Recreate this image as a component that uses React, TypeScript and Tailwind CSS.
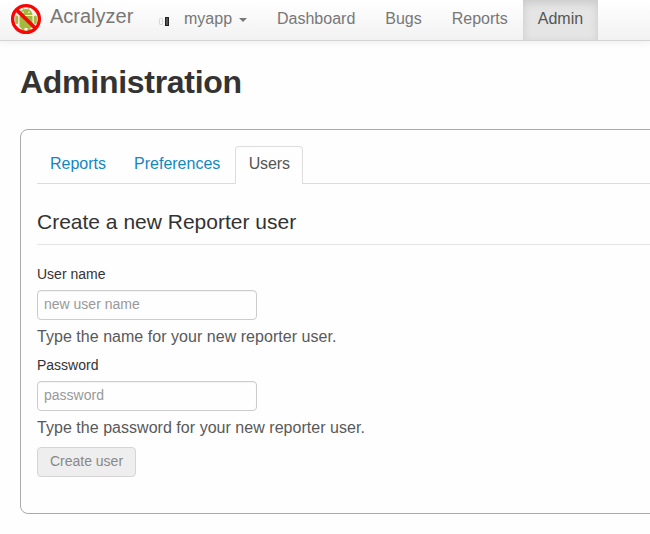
import React from "react";

function Logo() {
  return (
    <svg width="32" height="32" viewBox="0 0 32 32" className="shrink-0">
      <circle cx="16" cy="16" r="13" fill="#f6f3ea" />
      <g stroke="#b5c96a" strokeWidth="1.2" strokeLinecap="round">
        <path d="M12 3.5l1.6 3M20 3.5l-1.6 3" />
      </g>
      <path d="M9.5 12a6.5 6 0 0 1 13 0z" fill="#a3b93f" />
      <path d="M9.5 13h13v10a2 2 0 0 1-2 2h-9a2 2 0 0 1-2-2z" fill="#a3b93f" />
      <rect x="5.2" y="12.5" width="3" height="8.5" rx="1.5" fill="#a3b93f" />
      <rect x="23.8" y="12.5" width="3" height="8.5" rx="1.5" fill="#a3b93f" />
      <rect x="11.5" y="24" width="3" height="4" fill="#a3b93f" />
      <rect x="17.5" y="24" width="3" height="4" fill="#a3b93f" />
      <circle cx="13" cy="9.2" r=".8" fill="#fff" />
      <circle cx="19" cy="9.2" r=".8" fill="#fff" />
      <circle cx="16" cy="16" r="13.4" fill="none" stroke="#f80606" strokeWidth="3.3" />
      <path d="M6.8 7.2l18.4 17.8" stroke="#f80606" strokeWidth="3.8" />
    </svg>
  );
}

function Field({ label, placeholder, help, type }: { label: string; placeholder: string; help: string; type: string }) {
  return (
    <div className="flex flex-col items-start">
      <label className="mb-1.5 h-5 text-sm leading-5 text-[#333]">{label}</label>
      <input
        type={type}
        placeholder={placeholder}
        className="mb-[7px] h-[30px] w-[220px] rounded border border-[#ccc] bg-[#fefefe] px-1.5 pb-[2px] text-sm shadow-[inset_0_1px_1px_rgba(0,0,0,0.04)] placeholder:text-[#999]"
      />
      <p className="mb-2 h-5 text-base leading-5 tracking-[0.035px] text-[#595959]">{help}</p>
    </div>
  );
}

export default function App() {
  return (
    <div className="h-[534px] w-[650px] overflow-hidden bg-[#fefefe] font-['Liberation_Sans',Arial,sans-serif] text-[#333]">
      <nav className="flex h-[41px] border-b border-[#d4d4d4] bg-linear-to-b from-white to-[#f2f2f2] text-base leading-5 text-[#777] shadow-[0_1px_8px_rgba(0,0,0,0.08)]">
        <div className="flex w-[158px] pt-[3px] pl-[10px]">
          <Logo />
          <span className="mt-[3px] ml-2 text-xl leading-5">Acralyzer</span>
        </div>
        <div className="flex w-[104px]">
          <span className="mt-[18px] ml-[1px] h-[7px] w-1 rounded-[1px] border border-[#d8d8d8]" />
          <span className="mt-[17px] ml-[2px] h-[9px] w-1 border border-[#222] bg-[#555]" />
          <span className="mt-[9px] ml-[15px]">myapp</span>
          <span className="mt-[18px] ml-[7px] h-0 w-0 border-x-4 border-t-4 border-x-transparent border-t-[#777]" />
        </div>
        <a className="px-[15px] pt-[9px]">Dashboard</a>
        <a className="px-[15px] pt-[9px]">Bugs</a>
        <a className="px-[15px] pt-[9px]">Reports</a>
        <a className="bg-[#e5e5e5] px-[15px] pt-[9px] text-[#555] shadow-[inset_0_3px_8px_rgba(0,0,0,0.125)]">Admin</a>
      </nav>
      <main className="pl-5">
        <h1 className="mt-[21px] h-10 text-[32px] leading-10 font-bold tracking-[-0.28px]">Administration</h1>
        <section className="mt-[27px] h-[385px] w-[660px] rounded-lg border border-[#aaa] pt-4 pl-4">
          <div className="flex h-[38px] border-b border-[#ddd] text-base leading-5 text-[#1287c2]">
            <a className="mr-[2px] px-[13px] pt-2">Reports</a>
            <a className="mr-[2px] px-[13px] pt-2">Preferences</a>
            <a className="h-[38px] w-[68px] rounded-t border border-b-0 border-[#ddd] bg-[#fefefe] pt-[7px] text-center tracking-[-0.1px] text-[#555]">Users</a>
          </div>
          <h2 className="mt-[18px] mb-[19px] h-[43px] border-b border-[#e5e5e5] text-[21px] leading-10">Create a new Reporter user</h2>
          <Field label="User name" placeholder="new user name" help="Type the name for your new reporter user." type="text" />
          <Field label="Password" placeholder="password" help="Type the password for your new reporter user." type="password" />
          <button disabled className="mt-px h-[30px] w-[99px] rounded border border-[#d5d5d5] bg-[#eee] pb-[2px] text-sm text-[#888]">Create user</button>
        </section>
      </main>
    </div>
  );
}
